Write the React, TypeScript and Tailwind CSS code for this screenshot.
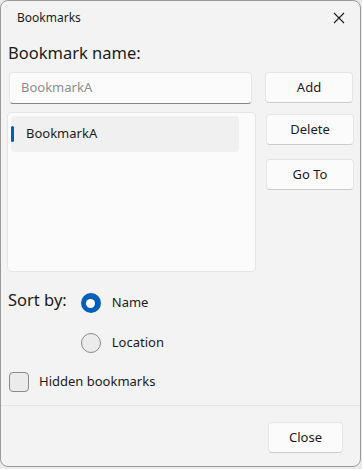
import React from "react";

const font = { fontFamily: '"Noto Sans", "Open Sans", sans-serif' };

function Button({ label, className }: { label: string; className: string }) {
  return (
    <button
      className={
        "flex items-center justify-center rounded-[4px] border border-[#e5e5e5] border-b-[#cccccc] bg-[#fbfbfb] text-[13px] text-[#1b1b1b] " +
        className
      }
    >
      {label}
    </button>
  );
}

export default function App() {
  return (
    <div className="h-[469px] w-[362px] bg-[#e9ece6]" style={font}>
      <div className="flex h-[467px] w-[361px] flex-col overflow-hidden rounded-lg border border-[#9a9a9a] bg-[#f3f3f3] text-[#1b1b1b]">
        {/* title bar */}
        <div className="flex h-[33px] items-center justify-between pl-[16px] pr-[15px]">
          <span className="text-[12px]">Bookmarks</span>
          <svg width="12" height="12" viewBox="0 0 12 12" className="mt-[1px]">
            <path d="M1 1 L11 11 M11 1 L1 11" stroke="#1b1b1b" strokeWidth="1.1" />
          </svg>
        </div>

        <div className="flex flex-1 flex-col">
          <div className="ml-[7px] mt-[8px] text-[16.5px] leading-[22px]">Bookmark name:</div>

          <div className="mt-[8px] flex items-start">
            <div className="ml-[8px] flex h-[32px] w-[243px] items-center rounded-[4px] border border-[#e5e5e5] border-b-[#868686] bg-[#fbfbfb] pl-[11px] text-[13px] text-[#8e8e8e]">
              BookmarkA
            </div>
            <Button label="Add" className="ml-[13px] h-[31px] w-[88px]" />
          </div>

          <div className="mt-[8px] flex items-start">
            <div className="ml-[6px] h-[160px] w-[249px] rounded-[4px] border border-[#e5e5e5] bg-[#fbfbfb] p-[3px]">
              <div className="relative flex h-[36px] w-[228px] items-center rounded-[4px] bg-[#f0f0f0] pl-[15px] text-[13px]">
                <span className="absolute left-0 top-[10px] h-[16px] w-[3px] rounded-full bg-[#005fb8]" />
                BookmarkA
              </div>
            </div>
            <div className="ml-[10px] mt-[2px] flex flex-col gap-[14px]">
              <Button label="Delete" className="h-[31px] w-[88px]" />
              <Button label="Go To" className="h-[31px] w-[88px]" />
            </div>
          </div>

          <div className="mt-[15px] flex items-start">
            <div className="ml-[7px] mt-[2px] text-[16.5px] leading-[22px]">Sort by:</div>
            <div className="ml-[14px] flex flex-col gap-[20px] pt-[6px]">
              <label className="flex items-center gap-[11px] text-[13px]">
                <span className="flex h-[20px] w-[20px] items-center justify-center rounded-full bg-[#005fb8]">
                  <span className="h-[9px] w-[9px] rounded-full bg-white" />
                </span>
                Name
              </label>
              <label className="flex items-center gap-[11px] text-[13px]">
                <span className="h-[20px] w-[20px] rounded-full border border-[#8a8a8a] bg-[#ebebeb]" />
                Location
              </label>
            </div>
          </div>

          <label className="ml-[8px] mt-[19px] flex items-center gap-[10px] text-[13px]">
            <span className="h-[20px] w-[20px] rounded-[4px] border border-[#8a8a8a] bg-[#ebebeb]" />
            Hidden bookmarks
          </label>
        </div>

        {/* footer */}
        <div className="flex h-[61px] items-start justify-end border-t border-[#e5e5e5] pr-[17px] pt-[16px]">
          <Button label="Close" className="h-[31px] w-[75px]" />
        </div>
      </div>
    </div>
  );
}
